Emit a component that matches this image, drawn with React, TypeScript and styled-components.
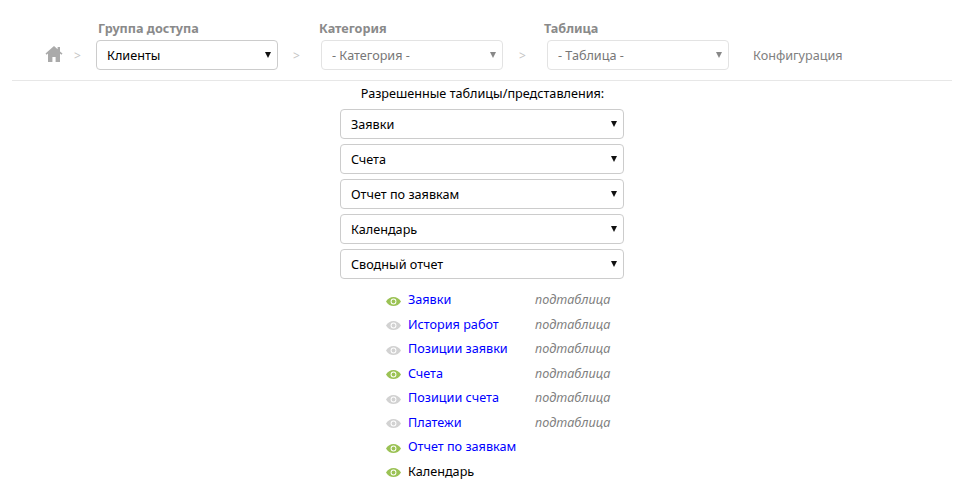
import styled, { createGlobalStyle } from "styled-components";

const GlobalStyle = createGlobalStyle`
    html, body {
        margin: 0;
        padding: 0;
        background: #fff;
        font-family: "Noto Sans", "Open Sans", sans-serif;
        font-size: 12.65px;
        color: #000;
    }
`;

const Page = styled.div`
    width: 959px;
    height: 502px;
    overflow: hidden;
    padding: 0 7px 0 12px;
    box-sizing: border-box;
`;

const Header = styled.div`
    height: 81px;
    box-sizing: border-box;
    border-bottom: 1px solid #e7e7e7;
    display: flex;
    align-items: flex-start;
    padding: 21px 0 0 33px;
`;

const HomeLink = styled.a`
    width: 18px;
    height: 18px;
    margin-top: 24px;
    color: #aaa;
    display: block;
`;

const Sep = styled.span<{ $width: number; $left: number }>`
    width: ${(p) => p.$width}px;
    margin-top: 27px;
    padding-left: ${(p) => p.$left}px;
    box-sizing: border-box;
    color: #c4c4c4;
    font-size: 12px;
    line-height: 16px;
`;

const Group = styled.div`
    width: 182px;
    display: flex;
    flex-direction: column;
`;

const GroupLabel = styled.label<{ $shift: number }>`
    height: 19px;
    line-height: 15px;
    margin-left: ${(p) => p.$shift}px;
    white-space: nowrap;
    font-weight: 700;
    font-size: 12.65px;
    color: #8a8a8a;
`;

const SelectWrap = styled.div<{ $wide?: boolean; $disabled?: boolean }>`
    position: relative;
    width: ${(p) => (p.$wide ? 284 : 182)}px;
    height: 30px;

    &::after {
        content: "";
        position: absolute;
        right: 7px;
        top: 12px;
        border-left: 3px solid transparent;
        border-right: 3px solid transparent;
        border-top: 6px solid ${(p) => (p.$disabled ? "#888" : "#111")};
        pointer-events: none;
    }
`;

const Select = styled.select`
    appearance: none;
    width: 100%;
    height: 30px;
    box-sizing: border-box;
    padding: 0 10px;
    background: #fff;
    border: 1px solid #ccc;
    border-radius: 4px;
    font-family: inherit;
    font-size: 12.65px;
    color: #000;

    &:disabled {
        color: #777;
        border-color: #e3e3e3;
        opacity: 1;
    }
`;

const ConfigLink = styled.a`
    margin: 19px 0 0 24px;
    line-height: 30px;
    color: #808080;
`;

const Main = styled.div`
    display: flex;
    flex-direction: column;
    align-items: center;
`;

const Title = styled.div`
    height: 28px;
    line-height: 24px;
    padding-left: 1px;
`;

const SelectStack = styled.div`
    display: flex;
    flex-direction: column;
    gap: 5px;
`;

const TableList = styled.div`
    width: 224px;
    align-self: flex-start;
    margin: 7.75px 0 0 374px;
    display: flex;
    flex-direction: column;
`;

const TableRow = styled.div`
    height: 24.5px;
    display: grid;
    grid-template-columns: 22px 127px 1fr;
    align-items: center;
`;

const Eye = styled.svg<{ $on: boolean }>`
    width: 15px;
    height: 9px;
    margin-top: 4px;
    color: ${(p) => (p.$on ? "#9bc255" : "#d2d2d2")};
`;

const TableLink = styled.a<{ $plain?: boolean }>`
    color: ${(p) => (p.$plain ? "#000" : "#0000ff")};
    white-space: nowrap;
`;

const Kind = styled.span`
    font-style: italic;
    color: #808080;
`;

const EyeIcon = ({ on }: { on: boolean }) => (
    <Eye $on={on} viewBox="0 0 15 9">
        <path
            fill="currentColor"
            fillRule="evenodd"
            d="M0 4.5C1.8 1.5 4.4 0 7.5 0S13.2 1.5 15 4.5C13.2 7.5 10.6 9 7.5 9S1.8 7.5 0 4.5zm7.5 2.9a2.9 2.9 0 1 0 0-5.8 2.9 2.9 0 0 0 0 5.8z"
        />
        <circle fill="currentColor" cx="7.5" cy="4.5" r="1.9" />
    </Eye>
);

const allowed = ["Заявки", "Счета", "Отчет по заявкам", "Календарь", "Сводный отчет"];

const tables = [
    { name: "Заявки", on: true, sub: true },
    { name: "История работ", on: false, sub: true },
    { name: "Позиции заявки", on: false, sub: true },
    { name: "Счета", on: true, sub: true },
    { name: "Позиции счета", on: false, sub: true },
    { name: "Платежи", on: false, sub: true },
    { name: "Отчет по заявкам", on: true, sub: false },
    { name: "Календарь", on: true, sub: false, plain: true },
];

export default function App() {
    return (
        <Page>
            <GlobalStyle />
            <Header>
                <HomeLink>
                    <svg viewBox="0 0 18 18" width="18" height="18">
                        <path
                            fill="currentColor"
                            d="M9 1 0.5 8.6 1.6 9.8 3 8.6V17h4.4v-5h3.2v5H15V8.6l1.4 1.2 1.1-1.2L15 6.4V2h-2.4v2.2z"
                        />
                    </svg>
                </HomeLink>
                <Sep $width={33} $left={11}>&gt;</Sep>
                <Group>
                    <GroupLabel $shift={2}>Группа доступа</GroupLabel>
                    <SelectWrap>
                        <Select defaultValue="Клиенты">
                            <option>Клиенты</option>
                        </Select>
                    </SelectWrap>
                </Group>
                <Sep $width={43} $left={15}>&gt;</Sep>
                <Group>
                    <GroupLabel $shift={-2}>Категория</GroupLabel>
                    <SelectWrap $disabled>
                        <Select disabled>
                            <option>- Категория -</option>
                        </Select>
                    </SelectWrap>
                </Group>
                <Sep $width={44} $left={16}>&gt;</Sep>
                <Group>
                    <GroupLabel $shift={-3}>Таблица</GroupLabel>
                    <SelectWrap $disabled>
                        <Select disabled>
                            <option>- Таблица -</option>
                        </Select>
                    </SelectWrap>
                </Group>
                <ConfigLink>Конфигурация</ConfigLink>
            </Header>
            <Main>
                <Title>Разрешенные таблицы/представления:</Title>
                <SelectStack>
                    {allowed.map((name) => (
                        <SelectWrap $wide key={name}>
                            <Select defaultValue={name}>
                                <option>{name}</option>
                            </Select>
                        </SelectWrap>
                    ))}
                </SelectStack>
                <TableList>
                    {tables.map((t) => (
                        <TableRow key={t.name}>
                            <EyeIcon on={t.on} />
                            <TableLink $plain={t.plain}>{t.name}</TableLink>
                            {t.sub && <Kind>подтаблица</Kind>}
                        </TableRow>
                    ))}
                </TableList>
            </Main>
        </Page>
    );
}
